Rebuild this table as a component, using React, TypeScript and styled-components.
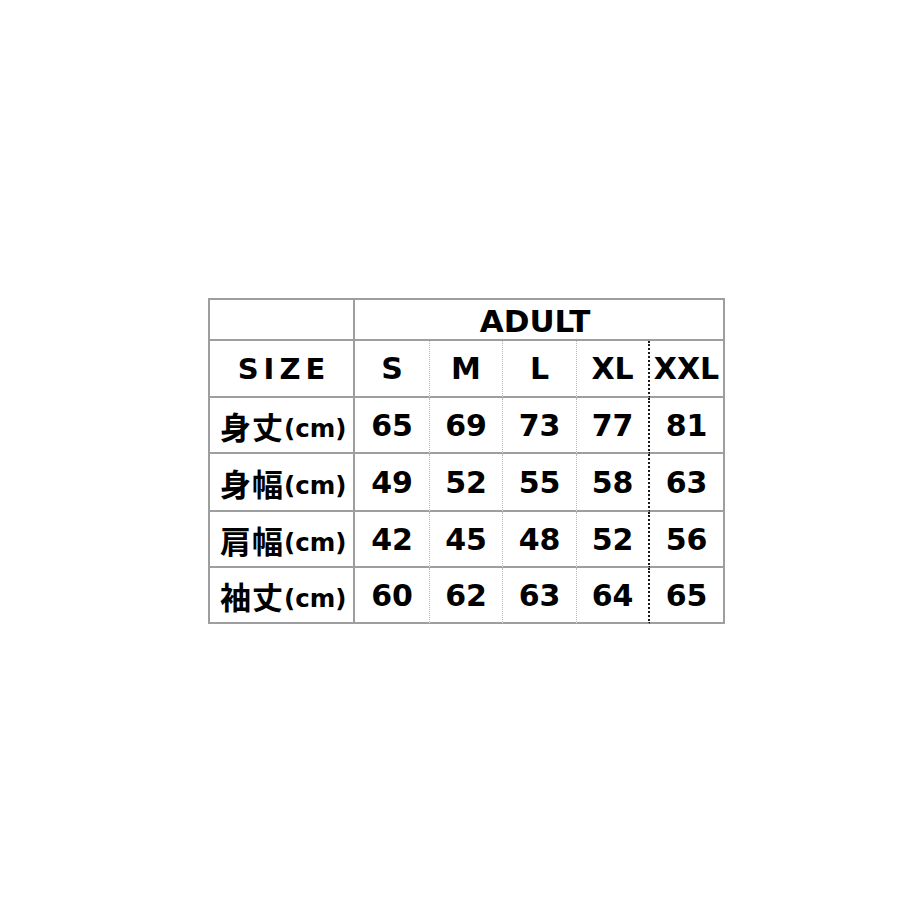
import React from 'react';
import styled, { createGlobalStyle } from 'styled-components';

type Edge = 'solid' | 'dot' | 'darkdot' | 'none';

const SIZES = ['S', 'M', 'L', 'XL', 'XXL'];

const ROWS = [
  { label: '身丈', values: [65, 69, 73, 77, 81] },
  { label: '身幅', values: [49, 52, 55, 58, 63] },
  { label: '肩幅', values: [42, 45, 48, 52, 56] },
  { label: '袖丈', values: [60, 62, 63, 64, 65] },
];

// 列ごとの右の罫線
const EDGES: Edge[] = ['solid', 'dot', 'dot', 'dot', 'darkdot', 'solid'];

const GlobalStyle = createGlobalStyle`
  html, body { margin: 0; padding: 0; background: #fff; }
  body { font-family: "DejaVu Sans", Verdana, sans-serif; color: #000; }
`;

const Page = styled.div`
  width: 920px;
  height: 920px;
  box-sizing: border-box;
  padding: 298px 0 0 208px;
`;

const Grid = styled.div`
  display: grid;
  grid-template-columns: 145px 75px 73px 74px 73px 75px;
  grid-template-rows: 41px 57px 56px 58px 56px 56px;
  width: 517px;
  box-sizing: border-box;
  border-top: 2px solid #9e9e9e;
  border-left: 2px solid #9e9e9e;
`;

const edgeCss = (e: Edge) => {
  switch (e) {
    case 'solid':
      return '2px solid #9e9e9e';
    case 'dot':
      return '1px dotted #b8b8b8';
    case 'darkdot':
      return '2px dotted #1a1a1a';
    default:
      return 'none';
  }
};

const Cell = styled.div<{ $right: Edge; $span?: number }>`
  box-sizing: border-box;
  display: flex;
  align-items: center;
  justify-content: center;
  border-bottom: 2px solid #9e9e9e;
  border-right: ${(p) => edgeCss(p.$right)};
  grid-column: ${(p) => (p.$span ? `span ${p.$span}` : 'auto')};
  font-weight: bold;
  font-size: 30px;
  white-space: nowrap;
  overflow: visible;
`;

const Title = styled.span`
  font-size: 31px;
  padding-top: 2px;
  padding-right: 8px;
`;

const SizeHead = styled.span`
  letter-spacing: 5px;
  font-size: 29px;
  padding-left: 5px;
`;

const Label = styled.div`
  box-sizing: border-box;
  display: flex;
  align-items: center;
  padding-left: 10px;
  border-bottom: 2px solid #9e9e9e;
  border-right: 2px solid #9e9e9e;
  white-space: nowrap;
  overflow: visible;
  font-weight: bold;
`;

const Kanji = styled.span`
  font-family: "Noto Sans CJK JP", sans-serif;
  font-size: 31px;
  font-weight: 700;
  letter-spacing: 1px;
`;

const Unit = styled.span`
  font-family: "DejaVu Sans", Verdana, sans-serif;
  font-size: 24.5px;
  padding-top: 6px;
`;

const App: React.FC = () => (
  <>
    <GlobalStyle />
    <Page>
      <Grid>
        <Cell $right="solid" />
        <Cell $right="solid" $span={5}>
          <Title>ADULT</Title>
        </Cell>

        <Cell $right="solid">
          <SizeHead>SIZE</SizeHead>
        </Cell>
        {SIZES.map((s, i) => (
          <Cell key={s} $right={EDGES[i + 1]}>
            {s}
          </Cell>
        ))}

        {ROWS.map((row) => (
          <React.Fragment key={row.label}>
            <Label>
              <Kanji>{row.label}</Kanji>
              <Unit>(cm)</Unit>
            </Label>
            {row.values.map((v, i) => (
              <Cell key={i} $right={EDGES[i + 1]}>
                {v}
              </Cell>
            ))}
          </React.Fragment>
        ))}
      </Grid>
    </Page>
  </>
);

export default App;
